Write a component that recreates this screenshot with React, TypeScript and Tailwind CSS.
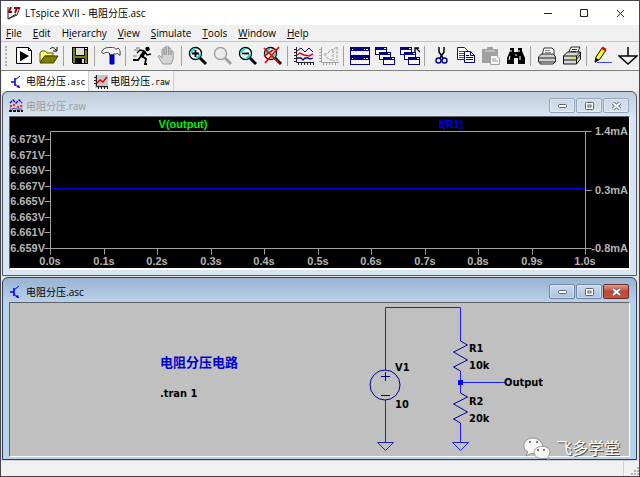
import React, { useState } from 'react';
import { clsx } from 'clsx';

const UI_FONT = "font-['Open_Sans','Noto_Sans_CJK_SC',sans-serif]";

/* ---------- menu ---------- */

// [before, mnemonic, after]
const MENUS = [
  ['', 'F', 'ile'],
  ['', 'E', 'dit'],
  ['H', 'i', 'erarchy'],
  ['', 'V', 'iew'],
  ['', 'S', 'imulate'],
  ['', 'T', 'ools'],
  ['', 'W', 'indow'],
  ['', 'H', 'elp'],
];

/* ---------- toolbar icons, 20x20 ---------- */

interface LensProps {
  muted?: boolean;
  children?: React.ReactNode;
}

function Lens({ muted = false, children }: LensProps) {
  const stroke = muted ? '#a0a0a0' : '#000';
  return (
    <>
      <circle cx="7.5" cy="7.5" r="6" fill={muted ? '#ececec' : '#fff'} stroke={stroke} strokeWidth="1.4" />
      {!muted && <path d="M3 7a5 5 0 0 1 4-4M12 8a5 5 0 0 1-4 4" stroke="#00e5e5" strokeWidth="2" fill="none" />}
      <path d="M12 12l6 6" stroke={stroke} strokeWidth="3" />
      {children}
    </>
  );
}

function MiniWindow({ x, y }: { x: number; y: number }) {
  return (
    <g shapeRendering="crispEdges">
      <rect x={x} y={y} width="12" height="8" fill="#000080" />
      <rect x={x + 1} y={y + 3} width="10" height="4" fill="#fff" />
      <rect x={x + 9} y={y + 1} width="2" height="1" fill="#fff" />
    </g>
  );
}

const ICONS: Record<string, React.ReactNode> = {
  run: (
    <>
      <path d="M2.500 1.500h12l3 3v13h-15z" fill="#fff" stroke="#000" />
      <path d="M14.500 1.500v3h3" fill="none" stroke="#000" />
      <path d="M6 5l9 5-9 5.500z" fill="#000" />
    </>
  ),
  open: (
    <>
      <path d="M1 16V7l1.500-2h4L8 7h6v3H6z" fill="#ffff80" stroke="#555500" />
      <path d="M1 17l4.500-7H19l-4.500 7z" fill="#808000" stroke="#404000" />
      <path d="M11 3c2-2 4-2 6 1M18 1v4h-4" fill="none" stroke="#000" />
    </>
  ),
  save: (
    <g shapeRendering="crispEdges">
      <path d="M2 1h16v17H3l-1-1z" fill="#000" />
      <path d="M3 2h2v8h10V4h2v13H3z" fill="#808000" />
      <rect x="6" y="2" width="8" height="7" fill="#dcdcdc" />
      <rect x="15" y="2" width="2" height="1" fill="#fff" />
      <rect x="5" y="12" width="10" height="5" fill="#000" />
      <rect x="12" y="13" width="2" height="4" fill="#dcdcdc" />
    </g>
  ),
  hammer: (
    <>
      <path d="M.5 6c1-3 4-4.500 7-4.500h4c2 0 3 1 3.500 2l2-1.500c2 1 2.500 4 2 7.500l-2.500-2-2 .5h-2V9H8.500V7C6 6 3.500 6 2.500 8z" fill="#f4f4f4" stroke="#444" />
      <path d="M9 9h4v9H9z" fill="#0000e0" stroke="#000080" />
    </>
  ),
  runner: (
    <>
      <circle cx="15.500" cy="3" r="2.200" fill="#000" />
      <path d="M13 5l-4 6" stroke="#000" strokeWidth="3.500" />
      <path d="M12 5L8 4 5 7M13 6l2 3 4-1" fill="none" stroke="#000" strokeWidth="1.500" />
      <path d="M9 10l-3 4H1M10 10l4 3-1 5h2" fill="none" stroke="#000" strokeWidth="1.800" />
      <path d="M4 2h4M2 4h4M1 10h4" stroke="#555" strokeWidth="0.800" />
    </>
  ),
  halt: (
    <path
      d="M6 18l-4-6c-2-2 0-3 1-2l2 2V4c0-1.500 2-1.500 2 0v5-7c0-1.500 2.300-1.500 2.300 0v7-8c0-1.500 2.300-1.500 2.300 0v8-6c0-1.500 2.300-1.500 2.300 0v6-3c0-1.500 2.300-1.500 2.300 0v7l-2 5z"
      fill="#d4d4d4"
      stroke="#999"
    />
  ),
  zoomIn: (
    <Lens>
      <path d="M7.500 4v7M4 7.500h7" stroke="#000" strokeWidth="1.800" />
    </Lens>
  ),
  pan: <Lens muted />,
  zoomOut: (
    <Lens>
      <path d="M4 7.500h7" stroke="#000" strokeWidth="1.800" />
    </Lens>
  ),
  zoomFit: (
    <Lens>
      <path d="M1 2l15 15M16 1L2 17M1 10l9-6" stroke="#f00000" strokeWidth="1.700" />
    </Lens>
  ),
  traces: (
    <>
      <path d="M2.500 1v15.500H20M0 3.500h2M0 6.500h2M0 9.500h2M0 12.500h2M0 15.500h2M4.500 17v2M7.500 17v2M10.500 17v2M13.500 17v2M16.500 17v2M19.500 17v2" fill="none" stroke="#222" />
      <path d="M3 5l4-3 4 4 4-4 4 4" fill="none" stroke="#000080" />
      <path d="M3 9l3-2 4 2 5 1 4-2" fill="none" stroke="#f00000" strokeWidth="1.400" />
      <path d="M3 12h4l2 2 2-2h3l2 1 3-1" fill="none" stroke="#000080" strokeWidth="1.300" />
    </>
  ),
  fft: (
    <g fill="none" stroke="#a0a0a0">
      <path d="M2.500 1v15.500H20M0 3.500h2M0 6.500h2M0 9.500h2M0 12.500h2M0 15.500h2M4.500 17v2M7.500 17v2M10.500 17v2M13.500 17v2M16.500 17v2" />
      <path d="M18 1v14M5 8h3l4-4 3-1 3-2M5 8l3 4 4 2 4 1M14 4v9" strokeDasharray="3 1" />
    </g>
  ),
  tile: (
    <g shapeRendering="crispEdges">
      <rect x="0" y="1" width="20" height="18" fill="#000080" />
      <rect x="1" y="5" width="18" height="4" fill="#f4f4f4" />
      <rect x="1" y="14" width="18" height="4" fill="#f4f4f4" />
      <path d="M2 3h1M14 3h1M16 3h2M2 12h1M14 12h1M16 12h2" stroke="#fff" />
    </g>
  ),
  cascade: (
    <>
      <MiniWindow x={0} y={1} />
      <MiniWindow x={4} y={6} />
      <MiniWindow x={8} y={11} />
    </>
  ),
  closeAll: (
    <>
      <MiniWindow x={0} y={1} />
      <MiniWindow x={4} y={6} />
      <MiniWindow x={8} y={11} />
      <path d="M20 6l-4-4M15 6V2h4" fill="none" stroke="#000" strokeWidth="1.300" />
    </>
  ),
  cut: (
    <g fill="none">
      <path d="M8 1v5l4 6M13 1v5l-4 6" stroke="#000" strokeWidth="1.500" />
      <circle cx="7.500" cy="14.500" r="2.500" stroke="#000090" strokeWidth="1.400" />
      <circle cx="13.500" cy="14.500" r="2.500" stroke="#000090" strokeWidth="1.400" />
    </g>
  ),
  copy: (
    <>
      <path d="M1.500 1.500h7l3 3v9h-10z" fill="#fff" stroke="#222" />
      <path d="M3 5.500h5M3 7.500h6M3 9.500h5M3 11.500h5" stroke="#555" />
      <path d="M8.500 5.500h6l4 4v7h-10z" fill="#fff" stroke="#000080" />
      <path d="M14.500 5.500v4h4M10 9.500h3M10 11.500h7M10 13.500h7" fill="none" stroke="#000080" />
    </>
  ),
  paste: (
    <>
      <rect x="1" y="3" width="16" height="14" rx="1" fill="#a0a0a0" />
      <rect x="6" y="1" width="6" height="3" rx="1" fill="#a0a0a0" />
      <path d="M4 5h10" stroke="#ddd" />
      <path d="M9.500 9.500h6l3 3v6h-9z" fill="#f4f4f4" stroke="#a0a0a0" />
      <path d="M11 13h4M11 15h6" stroke="#a0a0a0" />
    </>
  ),
  find: (
    <>
      <path d="M4 2h4v4h4V2h4v3l3 7v6h-7v-6H8v6H1v-6l3-7z" fill="#000" />
      <path d="M5 4v2M13 4v2M4 10l-1 4M14 10v4M10 8v2" stroke="#fff" />
    </>
  ),
  print: (
    <>
      <path d="M5 9l2-7h8l2 2v5" fill="#fff" stroke="#333" />
      <path d="M8 4.500h5M8 6.500h6" stroke="#888" />
      <path d="M1.500 11l3-3h12l2 3v5h-17z" fill="#d0d0d0" stroke="#222" />
      <path d="M3 16v2h13l2-2M2 12h16" fill="none" stroke="#222" />
    </>
  ),
  setup: (
    <>
      <path d="M6 8l3-7h9l-3 7" fill="#fff" stroke="#222" />
      <path d="M10 3.500h5M9 5.500h5" stroke="#222" />
      <path d="M1.500 10l4-4h13v7l-4 5h-13z" fill="#d8d8d8" stroke="#111" />
      <path d="M1.500 10h13v8M14.500 10l4-4M2 14h12l4-5" fill="none" stroke="#111" />
      <path d="M9 12h4" stroke="#e8e800" strokeWidth="1.400" />
    </>
  ),
  pencil: (
    <>
      <path d="M2 16l1-5 6-9 4 2-6 9z" fill="#ffff00" stroke="#000" />
      <path d="M8 2.500l1.500-2 3.500 2L12 5z" fill="#f00000" />
      <path d="M2 17l1-5 3 2z" fill="#000" />
      <path d="M4 16.500h15" stroke="#4040ff" />
    </>
  ),
  ground: <path d="M10 1v9M1 10h18l-9 8z" fill="none" stroke="#000" strokeWidth="1.500" />,
};

const TOOL_GROUPS: [string, string][][] = [
  [['run', 'Run'], ['open', 'Open']],
  [['save', 'Save']],
  [['hammer', 'Control Panel']],
  [['runner', 'Start simulation'], ['halt', 'Halt']],
  [['zoomIn', 'Zoom in'], ['pan', 'Pan'], ['zoomOut', 'Zoom out'], ['zoomFit', 'Zoom full extents']],
  [['traces', 'Autorange'], ['fft', 'FFT']],
  [['tile', 'Tile windows'], ['cascade', 'Cascade windows'], ['closeAll', 'Close all']],
  [['cut', 'Cut'], ['copy', 'Copy'], ['paste', 'Paste'], ['find', 'Find']],
  [['print', 'Print'], ['setup', 'Print setup']],
  [['pencil', 'Draw wire'], ['ground', 'Ground']],
];

function Toolbar() {
  return (
    <div className="flex h-[29px] items-center overflow-hidden border-t border-[#c4c4c4] bg-[#f0f0f0] pl-1">
      <div className="mr-1 h-5 w-[2px] shrink-0 border-l-2 border-dotted border-[#b0b0b0]" />
      {TOOL_GROUPS.map((group, g) => (
        <React.Fragment key={g}>
          {g > 0 && <div className="mr-[3px] ml-[2px] h-5 w-px shrink-0 bg-[#a0a0a0]" />}
          {group.map(([id, label]) => (
            <button key={id} aria-label={label} className="flex h-6 w-[25px] shrink-0 items-center justify-center">
              <svg width="20" height="20" viewBox="0 0 20 20">
                {ICONS[id]}
              </svg>
            </button>
          ))}
        </React.Fragment>
      ))}
    </div>
  );
}

/* ---------- document icons ---------- */

function AppLogo() {
  return (
    <svg width="14" height="14" viewBox="0 0 14 14">
      <path d="M1 1v12l9-4 3-8" fill="#fff" stroke="#222" />
      <path d="M4 1L2 6h3M7 2h6M10 2L8 7" fill="none" stroke="#9a0010" strokeWidth="2" />
      <path d="M1 13l8-5" stroke="#222" />
    </svg>
  );
}

function SchematicIcon() {
  return (
    <svg width="14" height="14" viewBox="0 0 14 14" fill="none" stroke="#0000f0">
      <path d="M1 7h4M5 3v8" strokeWidth="1.500" />
      <path d="M5 5l5-4M5 9l5 4" />
      <path d="M10 13l-4-1 3-2z" fill="#0000f0" stroke="none" />
    </svg>
  );
}

function PlotIcon() {
  return (
    <svg width="14" height="14" viewBox="0 0 14 14">
      <rect x="1" width="13" height="13" fill="#c8c8c8" />
      <path d="M2.500 0v11.500H14M0 2.500h2M0 5.500h2M0 8.500h2M4.500 12v2M7.500 12v2M10.500 12v2M13.500 12v2" fill="none" stroke="#222" />
      <path d="M3 8l3-3 3 2 4-5" fill="none" stroke="#f00000" strokeWidth="1.500" />
    </svg>
  );
}

function WaveIcon() {
  return (
    <svg width="14" height="14" viewBox="0 0 14 14">
      <rect width="14" height="12" fill="#c6ccd4" />
      <path d="M1 4l3-3 3 3 3-3 3 3" fill="none" stroke="#0000f0" strokeDasharray="3 1" strokeWidth="1.300" />
      <path d="M1 7h2M4 6h2M8 8h2M11 7h2" stroke="#f00000" strokeWidth="1.500" />
      <path d="M1 10h3l1-1 2 1h6" fill="none" stroke="#4040c0" />
      <path d="M0 12h14" stroke="#111" strokeWidth="2" strokeDasharray="3 1" />
    </svg>
  );
}

/* ---------- MDI child window ---------- */

interface ChildWindowProps {
  title: string;
  icon: React.ReactNode;
  active?: boolean;
  children: React.ReactNode;
}

function ChildWindow({ title, icon, active = false, children }: ChildWindowProps) {
  const button = clsx(
    'flex h-[15px] w-[26px] items-center justify-center rounded-xs border shadow-[inset_0_0_0_1px_rgba(255,255,255,0.4)]',
    active
      ? 'border-[#6f86a3] bg-linear-to-b from-[#c9daec] to-[#a9c2de]'
      : 'border-[#94a3b8] bg-linear-to-b from-[#ccd8e5] to-[#d5e1ee]'
  );
  return (
    <section
      className={clsx(
        'flex flex-col rounded-t-md border px-[6px]',
        active
          ? 'border-[#2e3c4c] bg-[#b9d1ea] bg-linear-to-b from-[#98b3d0] to-[#b9d1ea] to-[24px] pb-[2px]'
          : 'border-[#50565e] bg-[#d7e4f2] bg-linear-to-b from-[#bfcddb] to-[#d7e4f2] to-[24px] pb-[5px]'
      )}
    >
      <header className="flex h-6 items-center gap-px pt-1">
        {icon}
        <h2 className={clsx('flex-1 pl-[2px] text-[10px] leading-4', active ? 'text-black' : 'text-[#9a9a9a]')}>{title}</h2>
        <div className="-mt-px flex gap-px pr-px">
          <button aria-label="Minimize" className={button}>
            <svg width="9" height="5" viewBox="0 0 9 5">
              <rect x="0.500" y="1.500" width="8" height="3" rx="1" fill="#fff" stroke="#5a6270" />
            </svg>
          </button>
          <button aria-label="Restore" className={button}>
            <svg width="9" height="8" viewBox="0 0 9 8">
              <rect x="0.500" y="0.500" width="8" height="7" rx="1" fill="#fff" stroke="#5a6270" />
              <rect x="3" y="3" width="3" height="2" fill="#fff" stroke="#5a6270" />
            </svg>
          </button>
          <button
            aria-label="Close"
            className={
              active
                ? 'flex h-[15px] w-[26px] items-center justify-center rounded-xs border border-[#6b2a24] bg-linear-to-b from-[#dd9a8a] via-[#c2442c] to-[#c4583c]'
                : button
            }
          >
            <svg width="9" height="8" viewBox="0 0 9 8">
              <path d="M1 1l7 6M8 1L1 7" stroke="#5a6270" strokeWidth="3.500" />
              <path d="M1 1l7 6M8 1L1 7" stroke="#fff" strokeWidth="1.800" />
            </svg>
          </button>
        </div>
      </header>
      <div
        className={clsx(
          'border-x border-t border-t-[#5c6268] border-r-white border-l-[#5c6268]',
          active ? 'border-b border-b-white' : 'border-b-2 border-b-white'
        )}
      >
        {children}
      </div>
    </section>
  );
}

/* ---------- waveform plot ---------- */

const PLOT = { left: 40.5, right: 575.5, top: 14.5, bottom: 131.5 };
const VOLTS = ['6.673V', '6.671V', '6.669V', '6.667V', '6.665V', '6.663V', '6.661V', '6.659V'];
const AMPS = ['1.4mA', '0.3mA', '-0.8mA'];
const TIMES = ['0.0s', '0.1s', '0.2s', '0.3s', '0.4s', '0.5s', '0.6s', '0.7s', '0.8s', '0.9s', '1.0s'];

// centre of the pixel, so that a 1px line stays sharp
const snap = (n: number) => Math.floor(n) + 0.5;

function WavePlot() {
  const xStep = (PLOT.right - PLOT.left) / (TIMES.length - 1);
  const yStep = (PLOT.bottom - 22.5) / (VOLTS.length - 1);
  const ampStep = (PLOT.bottom - PLOT.top) / (AMPS.length - 1);

  return (
    <svg
      viewBox="0 0 619 151"
      className="block w-full bg-black font-['Liberation_Sans',sans-serif] text-[11px] font-bold"
      role="img"
      aria-label="Waveform plot"
    >
      <path d={`M${PLOT.left} 71.500H${PLOT.right}`} stroke="#0000e8" />
      <g stroke="#a0a0a0">
        <path d={`M${PLOT.left} ${PLOT.top}H${PLOT.right + 6}`} />
        <path d={`M${PLOT.left - 6} ${PLOT.bottom}H${PLOT.right + 6}`} />
        <path d={`M${PLOT.left} ${PLOT.top}V${PLOT.bottom}M${PLOT.right} ${PLOT.top}V${PLOT.bottom}`} />
        {VOLTS.map((v, i) => (
          <path key={v} d={`M${PLOT.left - 6} ${snap(22.5 + i * yStep)}h6`} />
        ))}
        {TIMES.map((t, i) => (
          <path key={t} d={`M${snap(PLOT.left + i * xStep)} ${PLOT.bottom}v6`} />
        ))}
        <path d={`M${PLOT.right} ${snap(PLOT.top + ampStep)}h6`} />
      </g>
      <g fill="#b4b4b4">
        {VOLTS.map((v, i) => (
          <text key={v} x="35" y={Math.round(26 + i * yStep)} textAnchor="end">
            {v}
          </text>
        ))}
        {AMPS.map((a, i) => (
          <text key={a} x="618" y={Math.round(18 + i * ampStep)} textAnchor="end">
            {a}
          </text>
        ))}
        {TIMES.map((t, i) => (
          <text key={t} x={Math.round(40 + i * xStep)} y="148" textAnchor="middle">
            {t}
          </text>
        ))}
      </g>
      <text x="173" y="11" textAnchor="middle" fill="#00f000">
        V(output)
      </text>
      <text x="441" y="11" textAnchor="middle" fill="#0000e8">
        I(R1)
      </text>
    </svg>
  );
}

/* ---------- schematic ---------- */

function Resistor({ y }: { y: number }) {
  return <path d={`M450.500 ${y}l7 4-14 7 14 8-14 7 7 4`} fill="none" stroke="#000090" />;
}

function Ground({ x }: { x: number }) {
  return <path d={`M${x - 8} 139.500h16l-8 8z`} fill="none" stroke="#2020e0" />;
}

function Schematic() {
  return (
    <svg
      viewBox="0 0 619 153"
      className="block w-full overflow-visible bg-[#c0c0c0] font-['DejaVu_Sans_Condensed','DejaVu_Sans',sans-serif] text-[11px] font-bold"
      role="img"
      aria-label="Schematic"
    >
      <path
        d="M375.500 67V4.500H450.500V38M450.500 68V90M450.500 120V139M375.500 97V139M450.500 79.500H495"
        fill="none"
        stroke="#1c1cff"
      />
      <rect x="448" y="77" width="5" height="5" fill="#0000ff" />
      <Resistor y={38} />
      <Resistor y={90} />
      <Ground x={375.5} />
      <Ground x={450.5} />
      <circle cx="375" cy="82" r="15" fill="none" stroke="#000090" />
      <path d="M371 73.500h9M375.500 69v9M371 92.500h9" stroke="#000090" />

      <text x="385" y="68">V1</text>
      <text x="385" y="105">10</text>
      <text x="459" y="49">R1</text>
      <text x="459" y="66">10k</text>
      <text x="459" y="102">R2</text>
      <text x="459" y="119">20k</text>
      <text x="494" y="83">Output</text>
      <text x="150" y="94">.tran 1</text>
      <text x="150" y="64" fill="#0000d0" className="font-['Noto_Sans_CJK_SC',sans-serif] text-[13px]">
        电阻分压电路
      </text>

      {/* watermark */}
      <g stroke="#808080" strokeWidth="0.800" fill="#f8f8f8">
        <path d="M518 149l-2 4 5-2.500c11 2 14-5 11-10-5-9-19-6-18 3 0 2 1 4 4 5.500z" />
        <path d="M536 155l3 2-1-3.500c3-3 2-7-1-9-6-3-13 0-13 5 0 5 6 7 12 5.500z" />
      </g>
      <g fill="#505050">
        <circle cx="520" cy="139" r="1" />
        <circle cx="527" cy="139" r="1" />
        <circle cx="528" cy="147" r="1" />
        <circle cx="534" cy="147" r="1" />
      </g>
      <g className="font-['Noto_Sans_CJK_SC',sans-serif] text-[16px] font-normal">
        <text x="547" y="152" fill="#505050">飞多学堂</text>
        <text x="546" y="151" fill="#ffffff">飞多学堂</text>
      </g>
    </svg>
  );
}

/* ---------- application frame ---------- */

const TABS = [
  { name: '电阻分压', ext: '.asc', icon: <SchematicIcon />, pad: 'pl-2' },
  { name: '电阻分压', ext: '.raw', icon: <PlotIcon />, pad: 'pl-[2px]' },
];

export default function App() {
  const [tab, setTab] = useState(0);

  return (
    <div className={clsx('flex min-h-screen flex-col border border-[#45444e] bg-[#f0f0f0] text-black', UI_FONT)}>
      <div className="flex h-6 items-center bg-white pr-px pl-[6px]">
        <AppLogo />
        <h1 className="flex-1 pl-1 text-[10px] leading-4">LTspice XVII - 电阻分压.asc</h1>
        <button aria-label="Minimize" className="flex w-9 justify-center">
          <svg width="9" height="9" viewBox="0 0 9 9" stroke="#222">
            <path d="M0 4.500h8" />
          </svg>
        </button>
        <button aria-label="Maximize" className="flex w-9 justify-center">
          <svg width="9" height="9" viewBox="0 0 9 9" fill="none" stroke="#222">
            <path d="M.5.5h7v7h-7z" />
          </svg>
        </button>
        <button aria-label="Close" className="flex w-9 justify-center">
          <svg width="9" height="9" viewBox="0 0 9 9" stroke="#222">
            <path d="M1 1l7 7M8 1l-7 7" />
          </svg>
        </button>
      </div>

      <nav className="flex h-4 items-center gap-[11px] pl-[5px] text-[10px] leading-4">
        {MENUS.map(([before, key, after]) => (
          <button key={before + key + after}>
            {before}
            <u>{key}</u>
            {after}
          </button>
        ))}
      </nav>

      <Toolbar />

      <div className="flex h-[21px] gap-[3px] border-t border-[#808080] pl-px" role="tablist">
        {TABS.map((t, i) => (
          <button
            key={t.ext}
            role="tab"
            aria-selected={tab === i}
            onClick={() => setTab(i)}
            className={clsx(
              "flex items-center gap-[2px] border-r border-[#d0d0d0] pt-[2px] pr-[3px] font-['DejaVu_Sans_Mono','Noto_Sans_CJK_SC',monospace] text-[10px] leading-4",
              t.pad,
              tab === i ? 'bg-white' : 'bg-[#f4f4f4]'
            )}
          >
            {t.icon}
            <span>
              {t.name}
              <span className="text-[8px]">{t.ext}</span>
            </span>
          </button>
        ))}
      </div>

      <main className="flex flex-1 flex-col gap-px bg-[#e4e4e0] pr-[2px] pl-px">
        <ChildWindow title="电阻分压.raw" icon={<WaveIcon />}>
          <WavePlot />
        </ChildWindow>
        <ChildWindow title="电阻分压.asc" icon={<SchematicIcon />} active>
          <Schematic />
        </ChildWindow>
      </main>

      <footer className="flex h-4 items-end justify-end border-t border-[#d4d4d4] bg-[#f0f0f0]">
        <div className="flex h-full items-end border-l border-[#d0d0d0] pb-px pl-[7px]">
          <svg width="8" height="8" viewBox="0 0 8 8" fill="#b0b0b0">
            <path d="M6 0h2v2H6zM3 3h2v2H3zM6 3h2v2H6zM0 6h2v2H0zM3 6h2v2H3zM6 6h2v2H6z" />
          </svg>
        </div>
      </footer>
    </div>
  );
}
